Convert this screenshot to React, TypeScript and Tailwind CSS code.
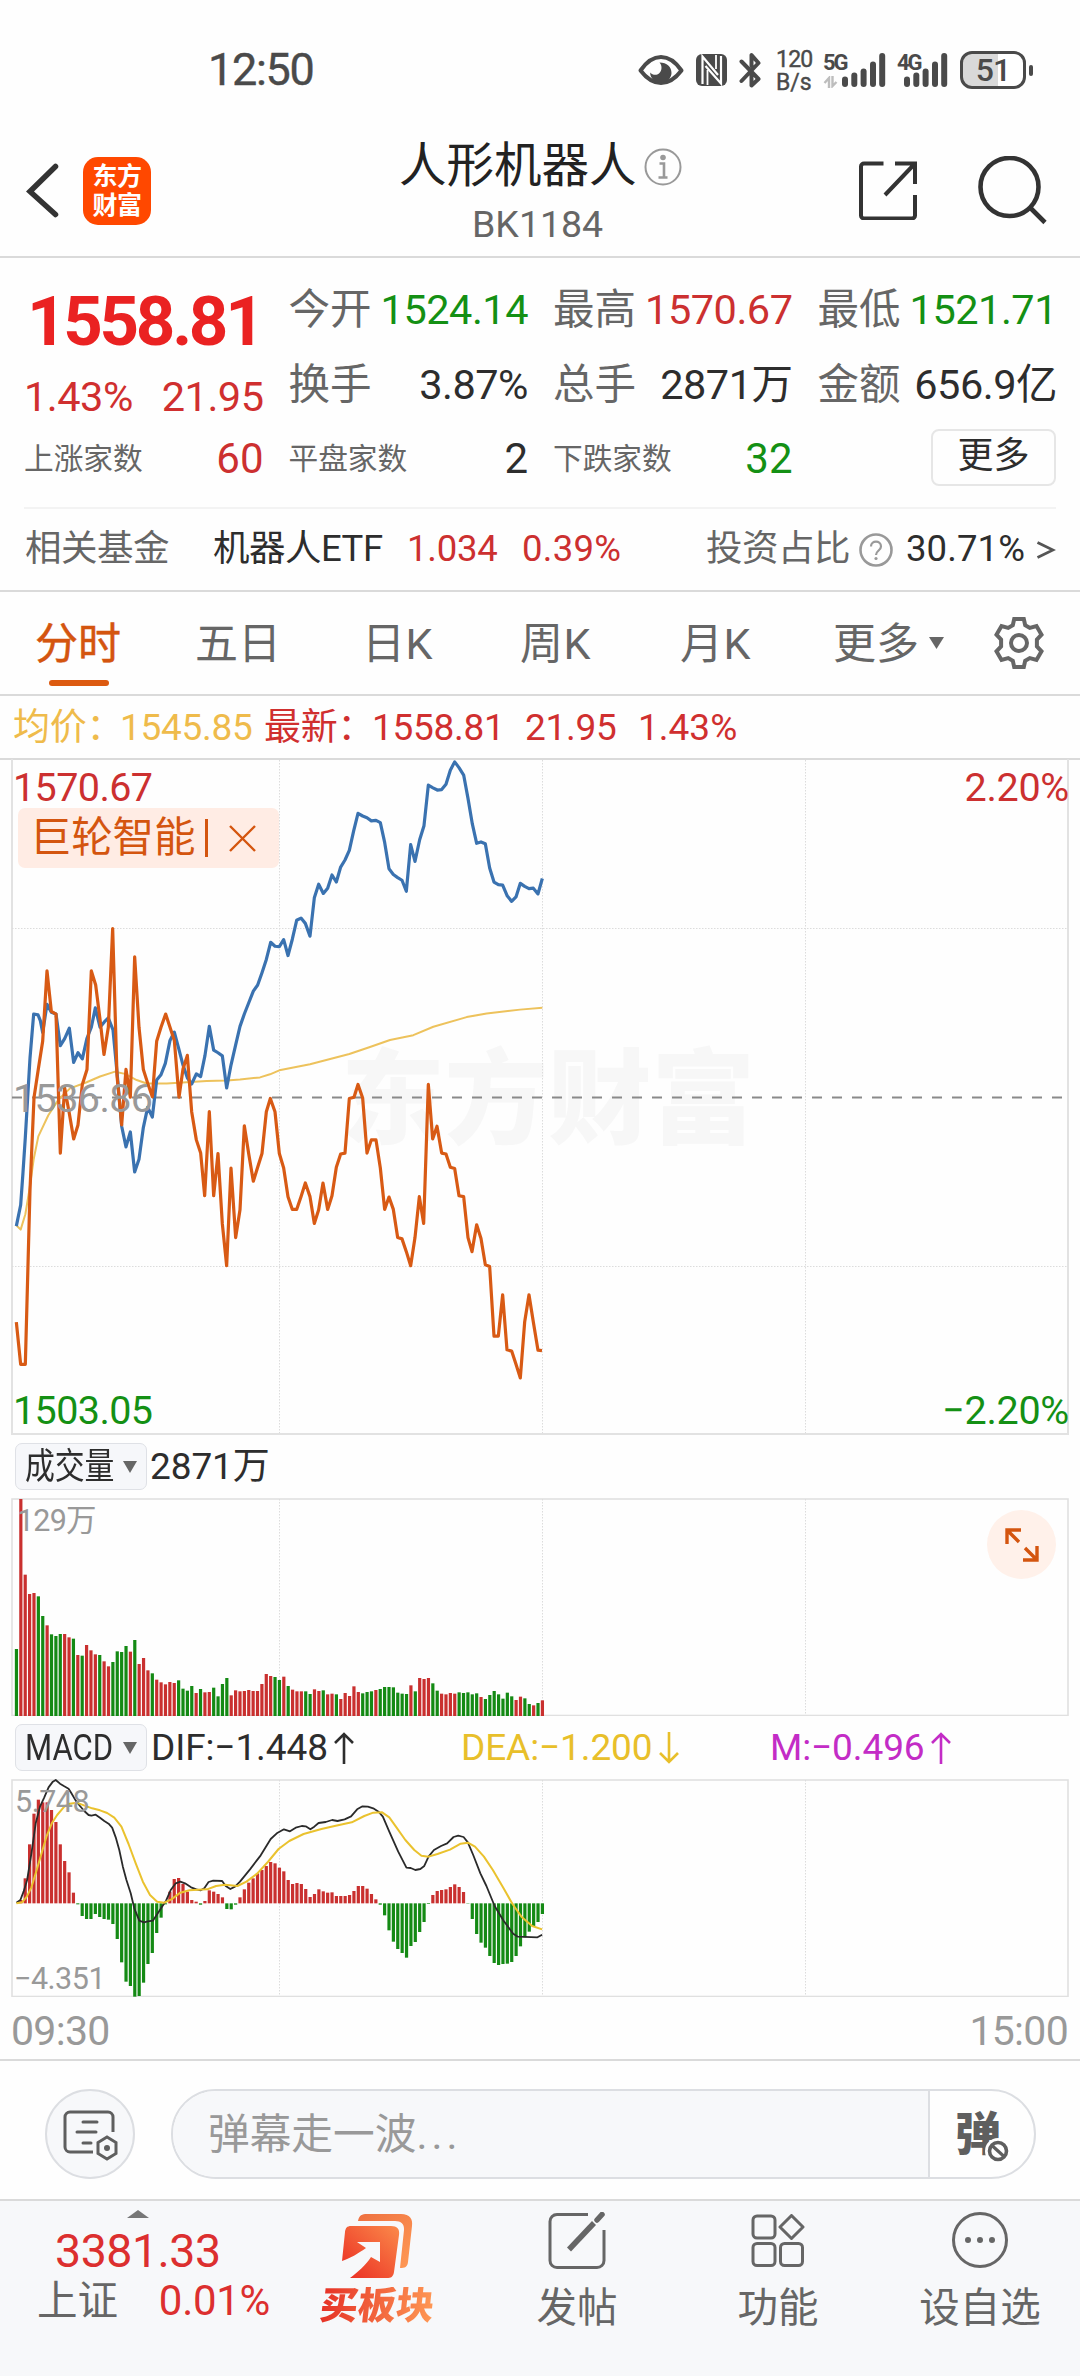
import React from "react";

/* ---------- intraday series, in plot units ---------- */
const PRICE =
  "49,1082 62,1034 69,960 76,880 83,790 90,700 101,600 114,602 121,615 128,642 141,578 154,596 168,600 181,672 194,656 208,632 221,710 234,688 247,702 261,655 274,630 286,586 300,630 313,618 325,609 339,636 352,740 365,855 378,902 391,868 404,959 417,930 430,858 443,812 457,834 470,750 483,738 496,712 510,660 523,641 536,678 549,716 562,745 575,759 589,736 602,742 615,694 628,628 641,682 654,688 667,695 680,768 693,716 707,670 720,628 733,600 746,575 760,548 773,534 786,506 799,476 812,437 825,446 838,447 851,431 864,467 877,430 890,387 903,382 916,394 930,423 943,336 956,305 970,326 983,314 996,284 1009,300 1022,266 1035,250 1048,228 1061,184 1074,144 1088,150 1101,154 1114,161 1128,160 1141,165 1154,210 1167,270 1180,283 1193,290 1206,296 1219,321 1232,215 1245,253 1259,204 1272,172 1285,80 1299,86 1312,91 1325,90 1338,78 1351,46 1364,27 1377,40 1391,57 1404,110 1417,168 1430,212 1443,209 1456,213 1469,268 1482,300 1495,306 1508,307 1522,332 1535,344 1548,334 1561,303 1574,310 1587,315 1600,314 1614,327 1627,292";
const PEER =
  "49,1300 62,1396 76,1396 90,1000 102,790 115,725 128,662 141,502 154,594 168,600 181,916 194,768 208,826 221,884 234,852 247,760 261,726 274,502 287,534 300,612 312,692 325,630 338,406 351,740 365,852 378,726 391,789 404,470 417,630 430,726 443,757 457,788 470,662 483,630 497,600 510,630 523,660 537,789 549,725 562,694 575,822 589,886 602,916 614,1013 628,822 641,1013 654,917 667,1077 680,1172 693,950 707,1108 720,1045 733,854 746,917 760,980 773,948 786,917 799,822 811,792 825,822 838,917 851,950 864,1015 877,1044 890,1044 903,1015 916,984 930,1015 943,1076 956,1045 969,984 983,1044 996,1013 1009,948 1022,918 1035,916 1048,792 1062,789 1074,760 1088,791 1101,916 1114,886 1128,886 1141,950 1154,1044 1167,1016 1180,1044 1193,1108 1206,1111 1219,1140 1232,1172 1245,1108 1258,1015 1271,1076 1285,760 1298,884 1311,855 1325,916 1338,918 1351,948 1364,951 1377,1013 1391,1015 1404,1108 1416,1140 1430,1079 1443,1110 1456,1170 1469,1174 1482,1332 1495,1332 1508,1238 1521,1363 1535,1366 1548,1396 1561,1427 1574,1300 1587,1238 1600,1300 1614,1364 1626,1365";
const AVERAGE =
  "49,1080 62,1090 76,1055 88,1000 101,930 115,878 145,830 175,795 210,769 260,755 300,742 345,731 375,736 410,750 440,758 500,758 560,755 620,752 680,751 720,749 780,744 810,737 838,728 930,714 1048,691 1110,675 1170,659 1240,648 1300,629 1400,607 1460,599 1560,590 1627,586";

const VOLUME =
  "g657 r207 r434 r492 r489 g499 g558 r586 g613 g618 g612 r612 r622 g626 r675 g677 r645 r661 r673 g675 r694 r709 g696 g664 g666 g648 r665 g630 r702 r684 r721 g730 r749 r757 r763 r756 r759 g751 g776 g782 g768 r789 g777 r787 r786 g773 g799 g762 g744 r796 r781 r784 r783 r780 r783 r783 r762 r732 r738 g741 g750 r740 g768 r779 r784 r784 g784 g792 r778 r783 g781 r793 r791 g793 r807 r789 r798 r769 r786 g790 g786 g784 r780 g777 g771 g771 g772 g788 g791 g792 r766 g784 r744 r747 r744 g760 g782 r791 r793 r789 r791 g787 g789 g787 g793 g790 r801 g807 g795 g783 g793 g806 g788 g799 r810 r800 g805 g822 r826 g819 r811".split(" ");
const MACD = [
  580, 570, 505, 403, 311, 269, 277, 277, 300, 336, 403, 453, 487, 548, 583, 618, 627, 627, 612, 621, 627, 629, 642, 687, 757, 815, 828, 860,
  858, 818, 762, 729, 669, 623, 583, 545, 507, 504, 522, 545, 570, 575, 584, 573, 541, 545, 552, 562, 597, 598, 584, 562, 538, 518, 505, 490,
  480, 468, 456, 460, 473, 484, 510, 522, 519, 522, 537, 561, 552, 538, 544, 548, 547, 558, 558, 558, 555, 543, 528, 528, 536, 552, 568, 584,
  616, 661, 695, 717, 729, 743, 708, 696, 666, 636, 582, 555, 543, 540, 538, 531, 523, 531, 546, 581, 627, 672, 698, 713, 738, 759, 765, 762,
  761, 756, 738, 709, 682, 665, 650, 636, 612,
];
const DIF =
  "46,578 57,570 66,545 76,510 88,430 100,340 112,290 124,262 136,232 148,215 156,210 168,221 180,229 192,236 200,250 212,272 224,288 236,303 248,315 256,317 268,314 280,323 292,333 304,341 314,353 324,382 334,420 344,470 354,510 366,550 376,595 390,632 403,637 414,634 428,632 440,613 455,588 465,572 478,540 492,520 505,515 518,520 535,532 550,538 562,541 572,535 584,516 597,512 622,513 632,528 645,537 658,530 672,515 700,478 730,436 758,387 775,370 795,358 812,364 828,353 845,348 856,349 869,358 880,350 892,339 912,336 930,330 945,333 965,328 983,319 1000,298 1015,289 1030,290 1045,295 1060,305 1072,320 1090,365 1115,425 1138,473 1150,474 1163,480 1177,477 1188,468 1200,440 1215,420 1235,408 1252,400 1270,381 1283,377 1298,381 1310,397 1325,435 1345,490 1362,528 1385,588 1410,632 1437,671 1450,680 1505,682 1518,674";
const DEA =
  "46,580 62,577 75,560 88,532 100,490 115,435 130,380 145,340 160,315 180,290 195,281 215,278 235,286 258,295 280,301 300,309 320,323 340,350 360,402 380,460 400,515 420,555 440,575 460,578 480,568 505,548 530,541 580,538 605,528 630,524 665,528 690,515 720,491 750,456 780,417 810,393 850,372 900,357 940,347 985,337 1020,318 1045,308 1070,307 1090,322 1110,352 1135,390 1160,420 1180,437 1200,440 1225,432 1260,419 1290,401 1310,398 1330,410 1355,440 1380,480 1410,535 1435,582 1460,620 1490,648 1518,658";

const RED = "#c9302f";
const GREEN = "#148a14";
const barX = (i: number) => 14.85 + i * 4.383;

/** Vertical session separators shared by the three charts. */
function Separators({ top, bottom }: { top: number; bottom: number }) {
  return (
    <g stroke="#dcdcdc" strokeWidth="1" strokeDasharray="1.5 1.5">
      {[279.5, 542.5, 805.5].map((x) => (
        <line key={x} x1={x} x2={x} y1={top} y2={bottom} />
      ))}
    </g>
  );
}

/* ---------- status bar ---------- */
function Signal() {
  return (
    <svg className="h-[36px] w-[44px]" viewBox="0 0 44 36" fill="#4a4a4a">
      <rect x="0" y="24.500" width="6" height="10.500" rx="3" />
      <rect x="9.300" y="20.500" width="6" height="14.500" rx="3" />
      <rect x="18.600" y="16.500" width="6" height="18.500" rx="3" />
      <rect x="28" y="9.500" width="6" height="25.500" rx="3" />
      <rect x="37.200" y="1" width="6" height="34" rx="3" />
    </svg>
  );
}

function StatusBar() {
  return (
    <div className="flex h-[140px] items-start text-[#4a4a4a]">
      <div className="ml-[208px] mt-[46px] w-[430px] text-[45px] leading-[48px] tracking-[-1.300px] [-webkit-text-stroke:0.400px_#4a4a4a]">12:50</div>
      <svg className="mt-[54px] h-[32px] w-[46px]" viewBox="0 0 46 32">
        <path d="M2.500 16.500C9 7 16 3 23 3s14 4 20.500 13.500C37 25 30 29 23 29S9 25 2.500 16.500Z" fill="none" stroke="#4a4a4a" strokeWidth="4" strokeLinejoin="round" />
        <path d="M21.500 8.500C29 8.500 33.500 13 33.500 19c0 5-4.500 9.500-10.500 9.500S12 24.500 12.200 18.500c2 2.500 6.300 3.300 8.800 1 3.300-2.800 3.300-8 .5-11Z" fill="#4a4a4a" />
      </svg>
      <svg className="ml-[12px] mt-[54px] h-[32px] w-[31px]" viewBox="0 0 31 32">
        <rect width="31" height="32" rx="6" fill="#4a4a4a" />
        <path d="M6.500 30V2.500L22 21M25 2v27.500L9.500 12" fill="none" stroke="#fff" strokeWidth="2.200" />
        <path d="M11.500 31V16M20 1v14" stroke="#fff" strokeWidth="1.800" />
      </svg>
      <svg className="ml-[12px] mt-[52px] h-[36px] w-[22px]" viewBox="0 0 22 36" fill="none" stroke="#4a4a4a" strokeWidth="4" strokeLinecap="round" strokeLinejoin="round">
        <path d="M2.500 9.500 19.500 27l-7 6.500V22M2.500 29 19.500 11l-7-8v11" />
      </svg>
      <div className="ml-[15px] mt-[48px] w-[47px] text-[23px] leading-[23px] [-webkit-text-stroke:0.400px_#4a4a4a]">
        <div className="h-[23px] tracking-[-0.800px]">120</div>
        <div className="h-[23px]">B/s</div>
      </div>
      <div className="relative mt-[52px] h-[36px] w-[62px]">
        <span className="absolute left-0 top-0 text-[22px] font-bold leading-[22px] tracking-[-2px]">5G</span>
        <svg className="absolute left-0 top-[24px] h-[12px] w-[15px]" viewBox="0 0 15 12" fill="none" stroke="#bdbdbd" strokeWidth="2.400">
          <path d="M6 12V2L1.500 7M9.500 0v10l4-4" />
        </svg>
        <div className="ml-[19px]"><Signal /></div>
      </div>
      <div className="relative ml-[12px] mt-[52px] h-[36px] w-[63px]">
        <span className="absolute left-0 top-0 text-[22px] font-bold leading-[22px] tracking-[-2px]">4G</span>
        <div className="ml-[7px]"><Signal /></div>
      </div>
      <div className="mt-[51px] flex h-[38px] w-[66px] items-center justify-center rounded-[12px] border-[3px] border-[#4a4a4a] bg-[linear-gradient(90deg,#d9d9d9_58%,#fff_58%)] text-[32px] font-medium leading-none tracking-[-1px]">
        51
      </div>
      <div className="ml-[3px] mt-[65px] h-[11px] w-[4px] rounded-full bg-[#4a4a4a]" />
    </div>
  );
}

/* ---------- title bar ---------- */
function TitleBar() {
  return (
    <header className="flex h-[118px] border-b-2 border-[#dadada]">
      <svg className="ml-[26px] mt-[22px] h-[56px] w-[34px]" viewBox="0 0 34 56" fill="none" stroke="#333" strokeWidth="5.500" strokeLinecap="round">
        <path d="M29.500 4.500 4 29.500l25.500 23" strokeLinejoin="miter" />
      </svg>
      <div className="ml-[23px] mt-[17px] h-[68px] w-[68px] rounded-[15px] bg-[#ff4800] pt-[5px] text-center text-[25px] font-bold leading-[29px] tracking-[-0.500px] text-white">
        <div>东方</div>
        <div>财富</div>
      </div>
      <div className="ml-[248px] w-[285px]">
        <div className="flex h-[54px] items-center">
          <h1 className="w-[245px] whitespace-nowrap text-[47.500px] leading-none text-[#222]">人形机器人</h1>
          <svg className="h-[38px] w-[38px]" viewBox="0 0 38 38" fill="none" stroke="#999" strokeWidth="2">
            <circle cx="19" cy="19" r="17.500" />
            <circle cx="19" cy="9.500" r="2.800" fill="#999" stroke="none" />
            <path d="M15.500 15.500h4.500v14M14.500 29.500h9" strokeWidth="2.600" />
          </svg>
        </div>
        <div className="ml-[73px] mt-[10px] text-[37.500px] leading-[40px] text-[#666]">BK1184</div>
      </div>
      <svg className="ml-[174px] mt-[20px] h-[60px] w-[60px]" viewBox="0 0 60 60" fill="none" stroke="#333" strokeWidth="4">
        <path d="M25.500 3.500H6a3 3 0 0 0-3 3v49a3 3 0 0 0 3 3h48a3 3 0 0 0 3-3V35M37 3.500h20V24M57 3.500 27 35" />
      </svg>
      <svg className="ml-[59px] mt-[16px] h-[72px] w-[72px]" viewBox="0 0 72 72" fill="none" stroke="#333" strokeWidth="4.600">
        <circle cx="32.500" cy="31" r="29" />
        <path d="M53 51.500 68 66.500" />
      </svg>
    </header>
  );
}

/* ---------- quote summary ---------- */
type Cell = { label: string; value: string; color: string };

function Pair({ label, value, color }: Cell) {
  return (
    <div className="flex h-[75px] items-center justify-between whitespace-nowrap text-[41.500px] leading-none">
      <span className="text-[#666]">{label}</span>
      <span className={`mr-[-1px] tracking-[-0.500px] ${color}`}>{value}</span>
    </div>
  );
}

function SmallPair({ label, value, color }: Cell) {
  return (
    <div className="flex h-[74px] items-center justify-between whitespace-nowrap leading-none">
      <span className="text-[29.700px] text-[#666]">{label}</span>
      <span className={`mr-[-1px] text-[42px] ${color}`}>{value}</span>
    </div>
  );
}

function Summary() {
  return (
    <section className="mx-[24px] h-[251px] border-b-2 border-[#f3f3f3] pt-[14px]">
      <div className="grid h-[224px] grid-cols-4 gap-x-[26px]">
        <div>
          <div className="mt-[7px] flex h-[84px] items-center pl-[3px] text-[69px] font-bold leading-none tracking-[-3.300px] text-[#ea2222]">1558.81</div>
          <div className="mb-[-6px] mt-[3px] flex h-[62px] items-center justify-between text-[41.500px] leading-none tracking-[-0.500px] text-[#d02f2f]">
            <span>1.43%</span>
            <span className="mr-[-1px]">21.95</span>
          </div>
          <SmallPair label="上涨家数" value="60" color="text-[#cc3030]" />
        </div>
        <div>
          <Pair label="今开" value="1524.14" color="text-[#149014]" />
          <Pair label="换手" value="3.87%" color="text-[#2d2d2d]" />
          <SmallPair label="平盘家数" value="2" color="text-[#2d2d2d]" />
        </div>
        <div>
          <Pair label="最高" value="1570.67" color="text-[#cc3030]" />
          <Pair label="总手" value="2871万" color="text-[#2d2d2d]" />
          <SmallPair label="下跌家数" value="32" color="text-[#149014]" />
        </div>
        <div>
          <Pair label="最低" value="1521.71" color="text-[#149014]" />
          <Pair label="金额" value="656.9亿" color="text-[#2d2d2d]" />
          <div className="flex h-[74px] items-center justify-end">
            <button className="mt-[-4px] h-[57px] w-[125px] rounded-[8px] border-2 border-[#e6e6e6] pb-[2px] text-[36px] leading-none text-[#2d2d2d]">更多</button>
          </div>
        </div>
      </div>
    </section>
  );
}

function FundRow() {
  return (
    <section className="flex h-[83px] items-center whitespace-nowrap border-b-2 border-[#dadada] pl-[25px] text-[36.500px] leading-none tracking-[-0.500px]">
      <span className="w-[188px] text-[#666]">相关基金</span>
      <span className="w-[194px] text-[#2d2d2d]">机器人ETF</span>
      <span className="w-[115px] tracking-[-0.200px] text-[#cc3030]">1.034</span>
      <span className="w-[184px] tracking-[0.300px] text-[#cc3030]">0.39%</span>
      <span className="w-[152px] text-[#666]">投资占比</span>
      <svg className="h-[36px] w-[36px]" viewBox="0 0 36 36" fill="none" stroke="#999" strokeWidth="2.600">
        <circle cx="18" cy="18" r="15.500" />
        <path d="M13 14.500c0-6.500 10-6.500 10 0 0 4-5 4-5 8.500" strokeWidth="2.200" />
        <circle cx="18" cy="26.500" r="1.600" fill="#999" stroke="none" />
      </svg>
      <span className="ml-[12px] w-[130px] tracking-[0.100px] text-[#2d2d2d]">30.71%</span>
      <svg className="h-[20px] w-[20px]" viewBox="0 0 20 20" fill="none" stroke="#555" strokeWidth="2.800">
        <path d="M1.500 2.500 17 10 1.500 17.500" />
      </svg>
    </section>
  );
}

function Tabs() {
  return (
    <nav className="flex h-[104px] items-center whitespace-nowrap border-b-2 border-[#dadada] text-[43px] leading-none text-[#666]">
      <div className="relative ml-[35px] flex h-full w-[160px] items-center text-[#d4550f] [-webkit-text-stroke:0.500px_#d4550f]">
        <span className="mt-[3px]">分时</span>
        <span className="absolute bottom-[8px] left-[14px] h-[6px] w-[60px] rounded-full bg-[#dc5a10]" />
      </div>
      <span className="mt-[3px] w-[167px]">五日</span>
      <span className="mt-[3px] w-[158px] tracking-[0.500px]">日K</span>
      <span className="mt-[3px] w-[160px] tracking-[0.500px]">周K</span>
      <span className="mt-[3px] w-[153px] tracking-[0.500px]">月K</span>
      <span className="mt-[3px] w-[96px]">更多</span>
      <svg className="h-[12px] w-[15px]" viewBox="0 0 15 12" fill="#666"><path d="M0 0h15L7.500 12Z" /></svg>
      <svg className="ml-[48px] h-[54px] w-[54px]" viewBox="0 0 54 54" fill="none" stroke="#666" strokeWidth="4" strokeLinejoin="miter">
        <path d="M22.200 3h9.600l1.400 6.200 4.600 2.700 6.700-1.800 5 8.600-4.600 4.800v6.900l4.600 4.900-5 8.600-6.700-1.800-4.600 2.700-1.400 6.200h-9.600l-1.400-6.200-4.600-2.700-6.700 1.800-5-8.600 4.600-4.900v-6.900l-4.600-4.800 5-8.600 6.700 1.800 4.600-2.700Z" />
        <circle cx="27" cy="27" r="8" />
      </svg>
    </nav>
  );
}

function AverageRow() {
  return (
    <div className="flex h-[62px] items-center whitespace-nowrap pl-[13px] text-[37px] leading-none tracking-[-0.300px] text-[#d02f2f]">
      <span className="w-[107px] text-[#efbb4b]">均价：</span>
      <span className="w-[144px] text-[#efbb4b]">1545.85</span>
      <span className="w-[108px]">最新：</span>
      <span className="w-[153px]">1558.81</span>
      <span className="w-[113px]">21.95</span>
      <span className="tracking-normal">1.43%</span>
    </div>
  );
}

/* ---------- charts ---------- */
function PriceChart() {
  return (
    <section className="relative h-[677px] text-[39.500px] leading-none tracking-[-0.600px]">
      <svg className="block h-[677px] w-full" viewBox="0 758 1080 677" fill="none">
        <text x="341" y="1136" fontSize="103.500" fontWeight="900" fill="#f7f7f7" letterSpacing="0">东方财富</text>
        <g stroke="#e2e2e2" strokeWidth="2">
          <path d="M0 759H1080" stroke="#dadada" />
          <path d="M12 759V1434H1068V759" />
        </g>
        <Separators top={760} bottom={1433} />
        <path d="M12 928.500H1068M12 1266.500H1068" stroke="#dcdcdc" strokeDasharray="1.5 1.5" />
        <path d="M12 1097.500H1066" stroke="#8a8a8a" strokeWidth="2" strokeDasharray="10 10" />
        <g transform="translate(0 750) scale(0.33333 0.44004)" strokeLinejoin="round">
          <polyline points={AVERAGE} stroke="#edc25c" strokeWidth="2" vectorEffect="non-scaling-stroke" />
          <polyline points={PRICE} stroke="#3a72b0" strokeWidth="3.200" vectorEffect="non-scaling-stroke" />
          <polyline points={PEER} stroke="#d85a14" strokeWidth="3.200" vectorEffect="non-scaling-stroke" />
        </g>
      </svg>
      <span className="absolute left-[13px] top-[10px] text-[#cc3030]">1570.67</span>
      <span className="absolute right-[11px] top-[10px] tracking-[-0.300px] text-[#cc3030]">2.20%</span>
      <span className="absolute left-[13px] top-[321px] text-[#999]">1536.86</span>
      <span className="absolute left-[13px] top-[633px] text-[#149014]">1503.05</span>
      <span className="absolute right-[11px] top-[633px] tracking-[-0.300px] text-[#149014]">−2.20%</span>
      <div className="absolute left-[18px] top-[50px] flex h-[60px] w-[261px] items-center rounded-[7px] bg-[#ffece4] pl-[12px] text-[41.500px] tracking-[-0.200px] text-[#d4550f]">
        巨轮智能
        <span className="ml-[10px] h-[38px] w-[3px] bg-[#d4550f]" />
        <svg className="ml-[21px] h-[27px] w-[27px]" viewBox="0 0 27 27" stroke="#d4550f" strokeWidth="2.400"><path d="m1 1 25 25M26 1 1 26" /></svg>
      </div>
    </section>
  );
}

function Chip({ children }: { children: React.ReactNode }) {
  return (
    <div className="relative ml-[15px] flex h-[47px] w-[132px] items-center rounded-[7px] border border-[#dfe1e6] bg-[#f6f7fa] pl-[9px]">
      <span className="w-[90px] whitespace-nowrap">{children}</span>
      <svg className="ml-[8px] h-[12px] w-[14px]" viewBox="0 0 14 12" fill="#666"><path d="M0 0h14L7 12Z" /></svg>
    </div>
  );
}

function Arrow({ down }: { down?: boolean }) {
  return (
    <svg className={`ml-[6px] h-[32px] w-[20px] ${down ? "rotate-180" : ""}`} viewBox="0 0 20 32" fill="none" stroke="currentColor" strokeWidth="2.600">
      <path d="M10 32V2M1 11 10 2l9 9" />
    </svg>
  );
}

function VolumeChart() {
  return (
    <section>
      <div className="flex h-[63px] items-center text-[37px] leading-none tracking-[-0.100px] text-[#2d2d2d]">
        <Chip><span className="inline-block origin-left scale-x-[0.83] text-[36px]">成交量</span></Chip>
        <span className="ml-[3px]">2871万</span>
      </div>
      <div className="relative h-[218px]">
        <svg className="block h-[218px] w-full" viewBox="0 1498 1080 218" fill="none">
          <rect x="12" y="1499" width="1056" height="216.500" stroke="#e0e0e0" strokeWidth="1.600" />
          <Separators top={1499} bottom={1715} />
          {VOLUME.map((b, i) => {
            const top = 1430 + Number(b.slice(1)) / 3;
            return <rect key={i} x={barX(i)} y={top} width="3.200" height={1716 - top} fill={b[0] === "r" ? RED : GREEN} />;
          })}
        </svg>
        <span className="absolute left-[17px] top-[8px] text-[30.500px] leading-none tracking-[-0.800px] text-[#999]">129万</span>
        <div className="absolute right-[24px] top-[12px] flex h-[69px] w-[69px] items-center justify-center rounded-full bg-[#fff1ea]">
          <svg className="h-[34px] w-[34px]" viewBox="0 0 34 34" fill="none" stroke="#d4550f" strokeWidth="3.400">
            <path d="M16 2H2v14M2.500 2.500 14 14M18 32h14V18M31.500 31.500 20 20" />
          </svg>
        </div>
      </div>
    </section>
  );
}

function MacdChart() {
  return (
    <section>
      <div className="flex h-[63px] items-center whitespace-nowrap text-[37px] leading-none tracking-[-0.100px] text-[#2d2d2d]">
        <Chip><span className="inline-block origin-left scale-x-[0.84] tracking-normal">MACD</span></Chip>
        <div className="ml-[4px] flex w-[310px] items-center">DIF:−1.448<Arrow /></div>
        <div className="flex w-[309px] items-center text-[#e8bf2a]">DEA:−1.200<Arrow down /></div>
        <div className="flex items-center text-[#c32cc6]">M:−0.496<Arrow /></div>
      </div>
      <div className="relative h-[218px] text-[30.500px] leading-none text-[#999]">
        <svg className="block h-[218px] w-full" viewBox="0 1779 1080 218" fill="none">
          <rect x="12" y="1780" width="1056" height="216.500" stroke="#e0e0e0" strokeWidth="1.600" />
          <Separators top={1780} bottom={1996} />
          {MACD.map((v, i) => (
            <rect key={i} x={barX(i)} y={1710 + Math.min(v, 580) / 3} width="3.200" height={Math.abs(v - 580) / 3} fill={v < 580 ? RED : GREEN} />
          ))}
          <g transform="translate(0 1710) scale(0.35714 0.33333)" strokeLinejoin="round">
            <polyline points={DIF} stroke="#2a2a2a" strokeWidth="1.800" vectorEffect="non-scaling-stroke" />
            <polyline points={DEA} stroke="#eac22e" strokeWidth="2" vectorEffect="non-scaling-stroke" />
          </g>
        </svg>
        <span className="absolute left-[15px] top-[8px] tracking-[-0.500px]">5.748</span>
        <span className="absolute left-[14px] top-[185px] tracking-[-0.500px]">−4.351</span>
      </div>
      <div className="flex h-[64px] items-center justify-between border-b-2 border-[#dadada] pl-[11px] pr-[12px] pt-[6px] text-[41px] leading-none tracking-[-0.700px] text-[#999]">
        <span>09:30</span>
        <span>15:00</span>
      </div>
    </section>
  );
}

/* ---------- comment bar ---------- */
function CommentBar() {
  return (
    <section className="flex h-[140px] items-center border-b-2 border-[#dadada] pt-[7px]">
      <div className="ml-[45px] flex h-[90px] w-[90px] items-center justify-center rounded-full border-2 border-[#dcdee2] bg-[#f7f8fa]">
        <svg className="ml-[2px] mt-[2px] h-[52px] w-[56px]" viewBox="0 0 56 52" fill="none" stroke="#5f5f5f" strokeWidth="3">
          <path d="M30 43H7a5 5 0 0 1-5-5V8a5 5 0 0 1 5-5h38a5 5 0 0 1 5 5v15" />
          <path d="M20 13h14M14 23h19M20 34h8" strokeLinecap="round" />
          <path d="m44 28 9 5.500v11L44 50l-9-5.500v-11Z" />
          <circle cx="44" cy="39" r="3" fill="#5f5f5f" stroke="none" />
        </svg>
      </div>
      <div className="ml-[36px] flex h-[90px] w-[865px] overflow-hidden rounded-full border-2 border-[#dcdee2]">
        <div className="flex w-[757px] items-center border-r-2 border-[#dcdee2] bg-[#f7f8fa] pl-[35px] text-[41.700px] leading-none text-[#999]">
          <span className="mt-[2px] whitespace-nowrap">弹幕走一波<span className="tracking-[4px]">...</span></span>
        </div>
        <div className="relative flex flex-1 items-center pl-[25px] text-[46px] font-black leading-none text-[#5f5f5f]">
          弹
          <svg className="absolute left-[55px] top-[47px] h-[26px] w-[26px]" viewBox="0 0 26 26" fill="none">
            <circle cx="13" cy="13" r="13" fill="#fff" />
            <circle cx="13" cy="13" r="8.500" stroke="#5f5f5f" strokeWidth="3.600" />
            <path d="m7.500 8 11 10" stroke="#5f5f5f" strokeWidth="3.200" />
          </svg>
        </div>
      </div>
    </section>
  );
}

/* ---------- bottom navigation ---------- */
function NavItem({ label, icon, className }: { label: string; icon: React.ReactNode; className: string }) {
  return (
    <div className={`flex flex-col items-center whitespace-nowrap text-[40.500px] leading-none text-[#666] ${className}`}>
      <div className="mt-[10px] h-[60px]">{icon}</div>
      <span className="mt-[17px]">{label}</span>
    </div>
  );
}

function BottomBar() {
  return (
    <footer className="flex h-[176px] bg-[#f7f8fa]">
      <div className="ml-[37px] w-[233px]">
        <svg className="ml-[90px] mt-[9px] h-[8px] w-[22px]" viewBox="0 0 22 8" fill="#777"><path d="M0 8h22L11 0Z" /></svg>
        <div className="ml-[18px] mt-[9px] text-[46.500px] leading-[48px] tracking-[-0.500px] text-[#dc2f2f]">3381.33</div>
        <div className="mt-[2px] flex h-[48px] items-center justify-between text-[40.500px] leading-none text-[#666]">
          <span>上证</span>
          <span className="text-[42px] tracking-[-0.300px] text-[#dc2f2f]">0.01%</span>
        </div>
      </div>
      <div className="ml-[50px] flex w-[114px] flex-col items-center">
        <svg className="mt-[11px] h-[68px] w-[72px]" viewBox="0 0 72 68">
          <defs>
            <linearGradient id="cardBack" x1="0" y1="0" x2="1" y2="1">
              <stop offset="0" stopColor="#ee7040" />
              <stop offset="1" stopColor="#ff9a55" />
            </linearGradient>
            <linearGradient id="cardFront" x1="0" y1="1" x2="1" y2="0">
              <stop offset="0" stopColor="#ea2b22" />
              <stop offset="1" stopColor="#fb8a4a" />
            </linearGradient>
          </defs>
          <path d="M17 9c1-6 4-7 9-7h34c9 0 12 5 11 12l-4 36c-.6 5-3 6-8 6l4-38c.5-6-3-9-9-9Z" fill="url(#cardBack)" />
          <path d="M10 14h40c6 0 9 3 8 9l-5 37c-.8 5-3 6-7 6H9c8-6 16-13 21-21l9 5V30H16l9 6C18 41 8 47 1 49l3-29c.5-4 2-6 6-6Z" fill="url(#cardFront)" />
        </svg>
        <span className="mt-[7px] -skew-x-6 whitespace-nowrap bg-[linear-gradient(90deg,#e52f25,#ff9a55)] bg-clip-text px-[2px] text-[38px] font-black leading-[38px] text-transparent">买板块</span>
      </div>
      <NavItem
        label="发帖"
        className="ml-[102px] w-[82px]"
        icon={
          <svg className="mt-[1px] h-[58px] w-[58px]" viewBox="0 0 58 58" fill="none" stroke="#666" strokeWidth="3">
            <path d="M40 2.500H9a7 7 0 0 0-7 7v39a7 7 0 0 0 7 7h40a7 7 0 0 0 7-7V18" />
            <path d="M21 37.500 46 11" strokeWidth="5.500" />
            <path d="m49 8 5-5.500" strokeWidth="5.500" strokeLinecap="round" />
          </svg>
        }
      />
      <NavItem
        label="功能"
        className="ml-[119px] w-[82px]"
        icon={
          <svg className="mt-[3px] h-[54px] w-[54px]" viewBox="0 0 54 54" fill="none" stroke="#666" strokeWidth="3">
            <rect x="2" y="2" width="22" height="22" rx="4" />
            <rect x="2" y="29.500" width="22" height="22" rx="4" />
            <rect x="29.500" y="29.500" width="22" height="22" rx="4" />
            <path d="m40.500 1.500 11.500 11.500-11.500 11.500L29 13Z" strokeLinejoin="round" />
          </svg>
        }
      />
      <NavItem
        label="设自选"
        className="ml-[100px] w-[122px]"
        icon={
          <svg className="h-[58px] w-[58px]" viewBox="0 0 58 58" fill="none" stroke="#666" strokeWidth="3">
            <circle cx="29" cy="29" r="26.500" />
            <g fill="#666" stroke="none">
              <circle cx="17" cy="29" r="3" />
              <circle cx="29" cy="29" r="3" />
              <circle cx="41" cy="29" r="3" />
            </g>
          </svg>
        }
      />
    </footer>
  );
}

export default function App() {
  return (
    <main className="h-[2376px] w-[1080px] overflow-hidden bg-[#fefefe] font-['Roboto','Noto_Sans_CJK_SC',sans-serif]">
      <StatusBar />
      <TitleBar />
      <Summary />
      <FundRow />
      <Tabs />
      <AverageRow />
      <PriceChart />
      <VolumeChart />
      <MacdChart />
      <CommentBar />
      <BottomBar />
    </main>
  );
}
